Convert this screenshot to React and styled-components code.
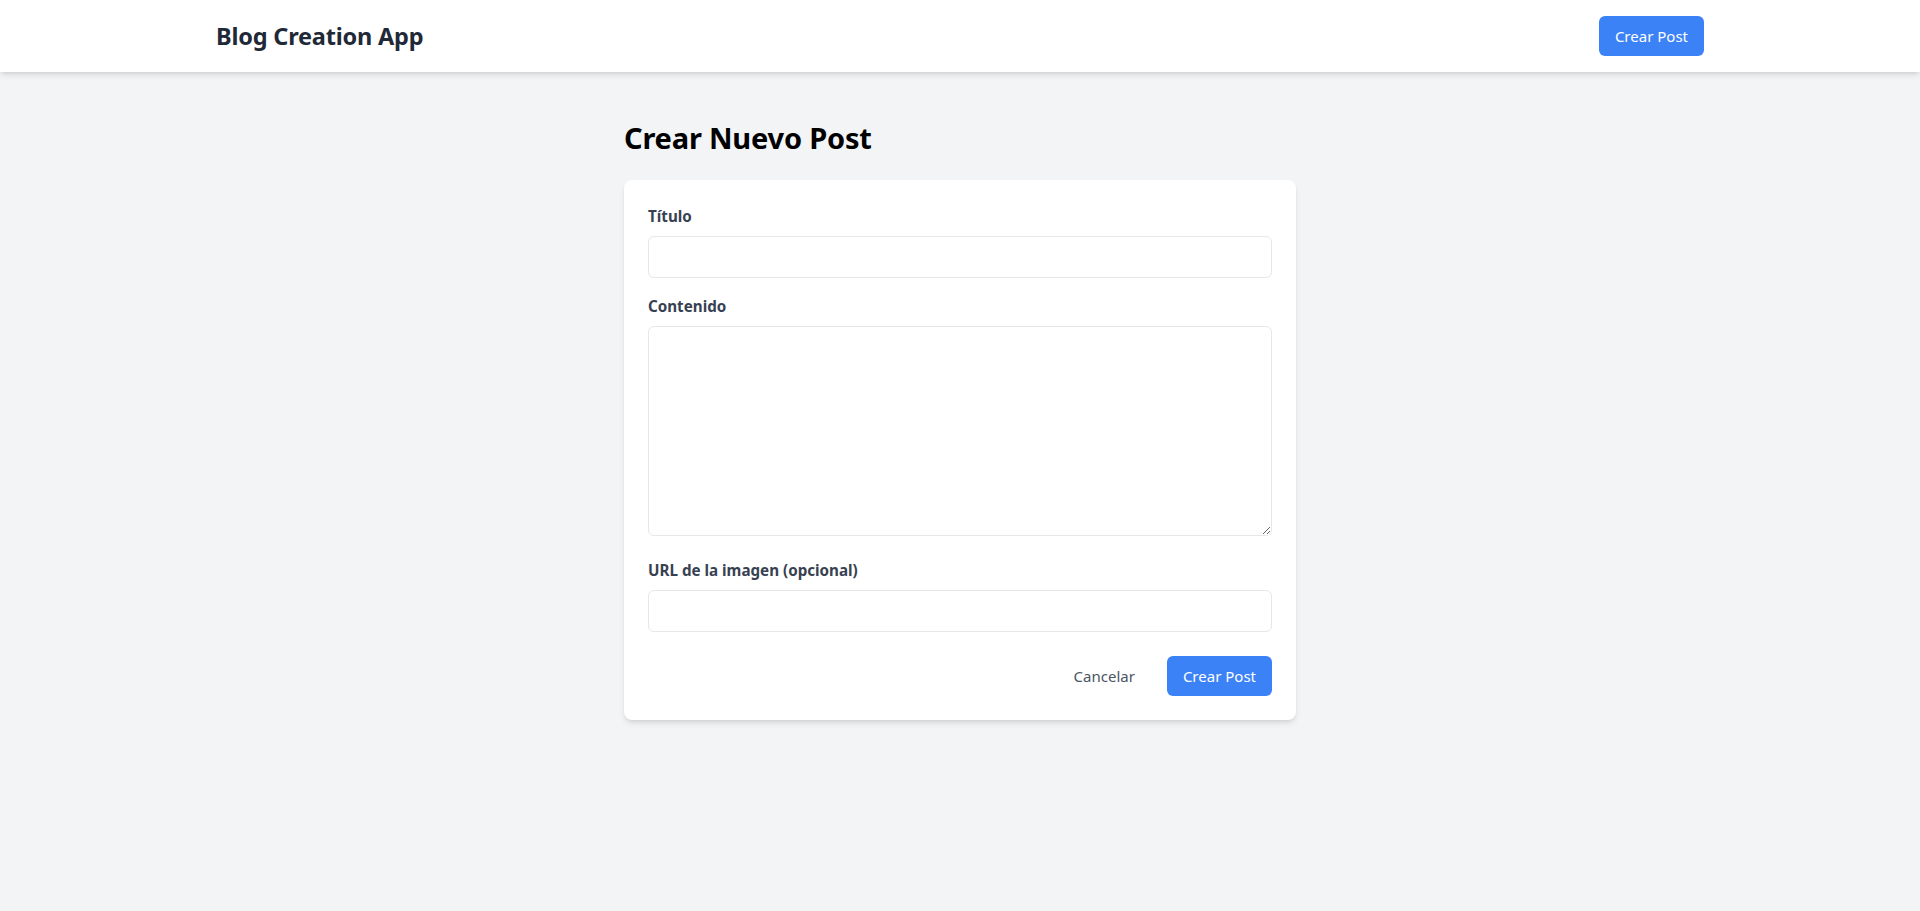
import React from "react";
import styled, { createGlobalStyle } from "styled-components";

const Global = createGlobalStyle`
  * { box-sizing: border-box; }
  html, body { margin: 0; padding: 0; }
  body {
    background: #f3f4f6;
    font-family: "Noto Sans", "Open Sans", Arial, sans-serif;
    line-height: 1.5;
    color: #111827;
  }
`;

const Page = styled.div`
  min-height: 911px;
  background: #f3f4f6;
`;

const Header = styled.header`
  background: #ffffff;
  box-shadow: 0 4px 6px -1px rgba(0,0,0,0.1), 0 2px 4px -2px rgba(0,0,0,0.1);
`;

const HeaderInner = styled.div`
  max-width: 1536px;
  margin: 0 auto;
  padding: 16px 24px;
  display: flex;
  align-items: center;
  justify-content: space-between;
`;

const Brand = styled.h1`
  margin: 0;
  font-size: 23.5px;
  font-weight: 700;
  color: #1f2937;
  line-height: 32px;
  letter-spacing: -0.2px;
`;

const PrimaryButton = styled.button`
  background: #3b82f6;
  color: #ffffff;
  border: none;
  border-radius: 6px;
  padding: 8px 16px;
  height: 40px;
  font-family: inherit;
  font-size: 15px;
  line-height: 24px;
  cursor: pointer;
  white-space: nowrap;
  min-width: 104px;
`;

const GhostButton = styled.button`
  background: transparent;
  color: #4b5563;
  border: none;
  padding: 8px 16px;
  height: 40px;
  font-family: inherit;
  font-size: 15px;
  line-height: 24px;
  cursor: pointer;
`;

const Main = styled.main`
  max-width: 672px;
  margin: 0 auto;
  padding-top: 48px;
`;

const Title = styled.h2`
  margin: 0 0 24px 0;
  font-size: 29px;
  line-height: 36px;
  font-weight: 700;
  color: #000000;
  letter-spacing: -0.2px;
`;

const Card = styled.form`
  background: #ffffff;
  border-radius: 8px;
  box-shadow: 0 4px 6px -1px rgba(0,0,0,0.1), 0 2px 4px -2px rgba(0,0,0,0.1);
  padding: 24px;
`;

const Field = styled.div`
  margin-bottom: ${(p) => p.$mb ?? 16}px;
`;

const Label = styled.label`
  display: block;
  font-size: 15.2px;
  line-height: 24px;
  font-weight: 700;
  color: #374151;
  margin-bottom: 8px;
`;

const Input = styled.input`
  display: block;
  width: 100%;
  height: 42px;
  border: 1px solid #e5e7eb;
  border-radius: 6px;
  padding: 8px 12px;
  font-family: inherit;
  font-size: 16px;
  background: #fff;
  outline: none;
`;

const TextArea = styled.textarea`
  display: block;
  width: 100%;
  height: 210px;
  border: 1px solid #e5e7eb;
  border-radius: 6px;
  padding: 8px 12px;
  font-family: inherit;
  font-size: 16px;
  background: #fff;
  outline: none;
  resize: vertical;
`;

const Actions = styled.div`
  display: flex;
  justify-content: flex-end;
  gap: 16px;
  margin-top: 24px;
`;

export default function App() {
  return (
    <Page>
      <Global />
      <Header>
        <HeaderInner>
          <Brand>Blog Creation App</Brand>
          <PrimaryButton type="button">Crear Post</PrimaryButton>
        </HeaderInner>
      </Header>
      <Main>
        <Title>Crear Nuevo Post</Title>
        <Card onSubmit={(e) => e.preventDefault()}>
          <Field>
            <Label htmlFor="titulo">Título</Label>
            <Input id="titulo" type="text" />
          </Field>
          <Field $mb={22}>
            <Label htmlFor="contenido">Contenido</Label>
            <TextArea id="contenido" />
          </Field>
          <Field $mb={0}>
            <Label htmlFor="imagen">URL de la imagen (opcional)</Label>
            <Input id="imagen" type="text" />
          </Field>
          <Actions>
            <GhostButton type="button">Cancelar</GhostButton>
            <PrimaryButton type="submit">Crear Post</PrimaryButton>
          </Actions>
        </Card>
      </Main>
    </Page>
  );
}
